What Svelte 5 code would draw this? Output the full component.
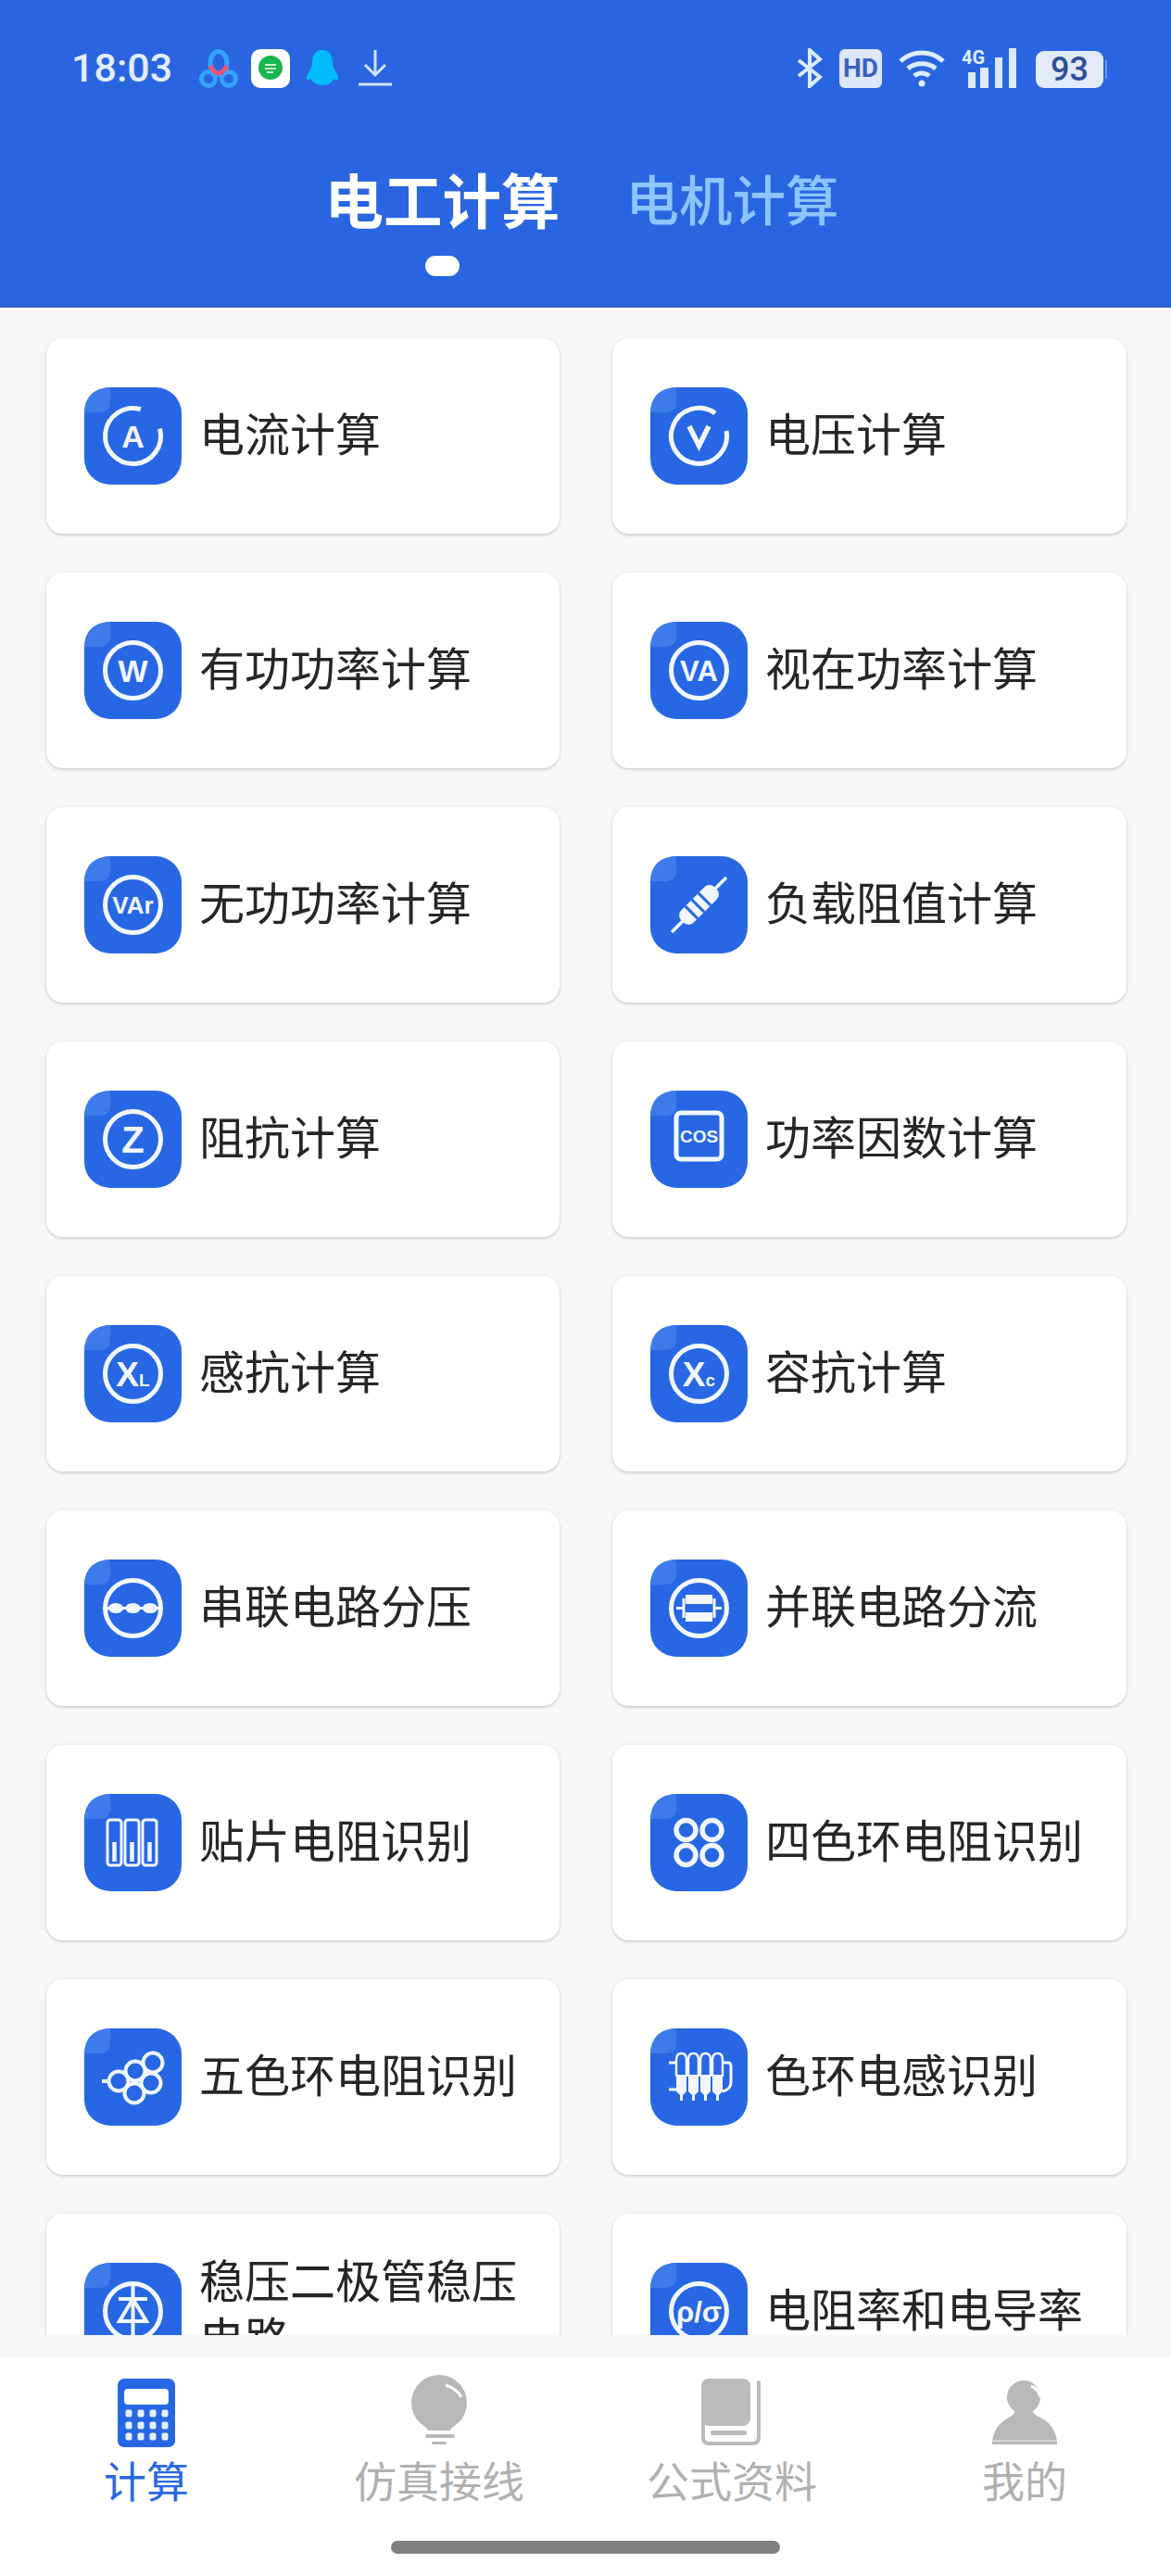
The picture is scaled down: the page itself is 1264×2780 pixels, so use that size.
<script>
  const items = [
    { label: '电流计算', icon: 'amp' },
    { label: '电压计算', icon: 'volt' },
    { label: '有功功率计算', icon: 'text', text: 'W', size: 34 },
    { label: '视在功率计算', icon: 'text', text: 'VA', size: 31 },
    { label: '无功功率计算', icon: 'text', text: 'VAr', size: 26 },
    { label: '负载阻值计算', icon: 'resistor' },
    { label: '阻抗计算', icon: 'text', text: 'Z', size: 40 },
    { label: '功率因数计算', icon: 'cos' },
    { label: '感抗计算', icon: 'text', text: 'X', sub: 'L', size: 37 },
    { label: '容抗计算', icon: 'text', text: 'X', sub: 'c', size: 37 },
    { label: '串联电路分压', icon: 'series' },
    { label: '并联电路分流', icon: 'parallel' },
    { label: '贴片电阻识别', icon: 'chip' },
    { label: '四色环电阻识别', icon: 'four' },
    { label: '五色环电阻识别', icon: 'five' },
    { label: '色环电感识别', icon: 'coil' },
    { label: '稳压二极管稳压电路', icon: 'zener' },
    { label: '电阻率和电导率', icon: 'text', text: 'ρ/σ', size: 31 }
  ];

  const dotRows = [37, 50, 62];
  const dotCols = [12, 25, 38, 51];
  const tabs = ['计算', '仿真接线', '公式资料', '我的'];
</script>

<div class="phone">
  <header class="header">
    <div class="status">
      <span class="time">18:03</span>
      <svg class="s-rings" width="42" height="42" viewBox="0 0 42 42" fill="none">
        <circle cx="10" cy="32" r="7.5" stroke="#37a3ff" stroke-width="5" />
        <circle cx="32" cy="32" r="7.5" stroke="#37a3ff" stroke-width="5" />
        <ellipse cx="21" cy="15" rx="9" ry="12.5" stroke="#37a3ff" stroke-width="5" />
        <path d="M12 18 Q21 34 30 18" stroke="#ef5474" stroke-width="5" />
      </svg>
      <svg class="s-app" width="42" height="42" viewBox="0 0 42 42">
        <rect width="42" height="42" rx="10" fill="#fff" />
        <circle cx="21" cy="20" r="13" fill="#16b84e" />
        <path d="M13 30 l6 -3 l-3 -3z" fill="#16b84e" />
        <path d="M15 17h12M15 21h12M17 25h7" stroke="#c9f2d6" stroke-width="2" />
      </svg>
      <svg class="s-qq" width="36" height="39" viewBox="0 0 36 39">
        <path d="M18 0C9 0 7 8 7 14C7 18 3 24 1 29C0 33 3 33 6 31C7 34 9 36 12 37C15 38 21 38 24 37C27 36 29 34 30 31C33 33 36 33 35 29C33 24 29 18 29 14C29 8 27 0 18 0Z" fill="#00bcff" />
      </svg>
      <svg class="s-down" width="36" height="40" viewBox="0 0 36 40" fill="none" stroke="#d3e4ff" stroke-width="3">
        <path d="M18 0V26M7 16L18 27L29 16M0 37H36" />
      </svg>
      <span class="status-gap"></span>
      <svg width="30" height="43" viewBox="0 0 30 43" fill="none" stroke="#dcebff" stroke-width="4">
        <path d="M3 13L26 31L15 41V2L26 12L3 30" />
      </svg>
      <span class="hd">HD</span>
      <svg class="s-wifi" width="50" height="41" viewBox="0 0 50 41" fill="none" stroke="#dcebff" stroke-width="5">
        <path d="M2 13C15 1 35 1 48 13M10 21C18 14 32 14 40 21M17 29C21 25 29 25 33 29" />
        <circle cx="25" cy="37" r="3.5" fill="#dcebff" stroke="none" />
      </svg>
      <div class="signal">
        <span class="net">4G</span>
        <span class="bar b1"></span>
        <span class="bar b2"></span>
        <span class="bar b3"></span>
        <span class="bar b4"></span>
      </div>
      <div class="battery">93</div>
      <span class="nub"></span>
    </div>

    <div class="tabs">
      <div class="tab active">
        <span>电工计算</span>
        <i></i>
      </div>
      <div class="tab">
        <span>电机计算</span>
      </div>
    </div>
  </header>

  <main class="list">
    <div class="grid">
      {#each items as item}
        <div class="card">
          <svg class="icon" width="105" height="105" viewBox="0 0 105 105" fill="none">
            <rect width="105" height="105" rx="28" fill="#2767e3" />
            <path d="M28 0V16Q28 27 16 27H0Q1 1 28 0Z" fill="#3d7bea" />
            <g stroke="#f2f7ff" stroke-width="5">
              {#if item.icon === 'amp'}
                <path d="M81.5 44.7A30 30 0 1 1 60.8 23.7" />
                <text class="gl" x="52.5" y="65" font-size="34" text-anchor="middle" fill="#f2f7ff" stroke="none">A</text>
              {:else if item.icon === 'volt'}
                <path d="M82 47A30 30 0 1 1 70 28" />
                <path d="M42 42L52.5 63L63 42" stroke-width="5.5" />
              {:else if item.icon === 'text'}
                <circle cx="52.5" cy="52.5" r="30" />
                <text class="gl" x="52.5" y={52.5 + item.size * 0.36} font-size={item.size} text-anchor="middle" fill="#f2f7ff" stroke="none">{item.text}{#if item.sub}<tspan font-size="19">{item.sub}</tspan>{/if}</text>
              {:else if item.icon === 'resistor'}
                <path d="M23 82L82 23" stroke-width="3.5" />
                <g transform="rotate(-45 52.5 52.5)">
                  <rect x="27" y="43" width="51" height="19" rx="8" fill="#eef5ff" stroke="none" />
                  <path d="M41 43V62M51 43V62M61 43V62" stroke="#2767e3" stroke-width="3" />
                </g>
              {:else if item.icon === 'cos'}
                <rect x="28" y="24" width="49" height="50" rx="5" />
                <text class="gl" x="52.5" y="56" font-size="19" text-anchor="middle" fill="#f2f7ff" stroke="none">COS</text>
              {:else if item.icon === 'series'}
                <circle cx="52.5" cy="52.5" r="30" />
                <path d="M23 52.5H82" stroke-width="3" />
                <ellipse cx="34" cy="52.5" rx="8" ry="5.5" fill="#f2f7ff" stroke="none" />
                <ellipse cx="52.5" cy="52.5" rx="8" ry="5.5" fill="#f2f7ff" stroke="none" />
                <ellipse cx="71" cy="52.5" rx="8" ry="5.5" fill="#f2f7ff" stroke="none" />
              {:else if item.icon === 'parallel'}
                <circle cx="52.5" cy="52.5" r="30" />
                <path d="M28 52.5H36M69 52.5H77M36 42V63M69 42V63" stroke-width="3" />
                <rect x="38" y="38" width="29" height="10" fill="#f2f7ff" stroke="none" />
                <rect x="38" y="57" width="29" height="10" fill="#f2f7ff" stroke="none" />
              {:else if item.icon === 'chip'}
                {#each [25, 44, 63] as x}
                  <rect x={x} y="28" width="15" height="49" rx="3" stroke-width="3" />
                  <path d="M{x + 7.5} 52V73" stroke-width="4.5" />
                {/each}
              {:else if item.icon === 'four'}
                <circle cx="38.5" cy="39" r="10.5" stroke-width="5.5" />
                <circle cx="66.5" cy="39" r="10.5" stroke-width="5.5" />
                <circle cx="38.5" cy="66" r="10.5" stroke-width="5.5" />
                <circle cx="66.5" cy="66" r="10.5" stroke-width="5.5" />
              {:else if item.icon === 'five'}
                <path d="M19 57H27" stroke-width="4" />
                <g stroke-width="4">
                  <circle cx="37" cy="57" r="10.5" />
                  <circle cx="55" cy="46" r="10.5" />
                  <circle cx="54" cy="70" r="10.5" />
                  <circle cx="74" cy="37" r="10.5" />
                  <circle cx="72" cy="59" r="10.5" />
                </g>
              {:else if item.icon === 'coil'}
                <path d="M20 37H28M20 66H28M78 37H84Q87 37 87 41V58Q87 66 78 68" stroke-width="3" />
                {#each [28, 41, 54, 67] as x}
                  <path d="M{x} 52V34Q{x} 27 {x + 5.5} 27Q{x + 11} 27 {x + 11} 34V52" stroke-width="2.5" />
                  <path d="M{x} 50H{x + 11}V68L{x + 7} 72V78H{x + 4}V72L{x} 68Z" fill="#f2f7ff" stroke="none" />
                {/each}
              {:else if item.icon === 'zener'}
                <circle cx="52.5" cy="52.5" r="30" />
                <path d="M52.5 22V83M37 39H68" stroke-width="4" />
                <path d="M52.5 39L38 63H67Z" stroke-width="4" />
              {/if}
            </g>
          </svg>
          <span class="label">{item.label}</span>
        </div>
      {/each}
    </div>
  </main>
  <div class="strip"></div>

  <footer class="footer">
    <nav class="nav">
      {#each tabs as tab, i}
        <div class="nav-item" class:on={i === 0}>
          <div class="nav-icon">
            {#if i === 0}
              <svg width="62" height="80" viewBox="0 -4 62 80">
                <rect width="62" height="74" rx="7" fill="#2767e3" />
                <rect x="7" y="11" width="48" height="17" rx="4" fill="#fff" />
                {#each dotRows as y}
                  {#each dotCols as x}
                    <rect x={x - 3.5} y={y - 3.5} width="7" height="8" rx="2" fill="#e4f0ff" />
                  {/each}
                {/each}
              </svg>
            {:else if i === 1}
              <svg width="62" height="80" viewBox="0 0 62 80">
                <circle cx="31" cy="30" r="30" fill="#b8b8b8" />
                <path d="M13 50H49L43 60H19Z" fill="#b8b8b8" />
                <path d="M38 11Q50 15 55 24" fill="none" stroke="#fff" stroke-width="3" />
                <rect x="16" y="64" width="32" height="4" rx="2" fill="#b8b8b8" />
                <rect x="23" y="72" width="16" height="3" rx="1.5" fill="#b8b8b8" />
              </svg>
            {:else if i === 2}
              <svg width="66" height="80" viewBox="0 0 66 80">
                <rect x="0" y="4" width="53" height="51" rx="8" fill="#bbb" />
                <path d="M2 48V68Q2 74 8 74H55Q62 74 62 67V8" fill="none" stroke="#bbb" stroke-width="4" stroke-linecap="round" />
                <rect x="10" y="60" width="39" height="5" rx="2" fill="#bbb" />
              </svg>
            {:else}
              <svg width="70" height="80" viewBox="0 0 70 80">
                <circle cx="34" cy="24" r="18" fill="#b8b8b8" />
                <path d="M42 12Q50 15 52 24" fill="none" stroke="#fff" stroke-width="3" />
                <path d="M25 38H43Q46 44 52 46Q68 54 70 72V75H0V72Q2 54 18 46Q24 43 25 38Z" fill="#b8b8b8" />
                <rect x="0" y="70" width="70" height="2" fill="#d6d6d6" />
              </svg>
            {/if}
          </div>
          <span>{tab}</span>
        </div>
      {/each}
    </nav>
    <div class="home"></div>
  </footer>
</div>

<style>
  :global(body) {
    margin: 0;
    background: #f7f7f7;
  }

  .phone {
    width: 1264px;
    height: 2780px;
    display: flex;
    flex-direction: column;
    overflow: hidden;
    font-family: 'Noto Sans CJK SC', 'Noto Sans', sans-serif;
    background: #f7f7f7;
  }

  .header {
    height: 332px;
    flex: none;
    box-sizing: border-box;
    padding-top: 52px;
    background: #2965e0;
    border-bottom: 2px solid #3559c4;
  }

  .status {
    height: 43px;
    display: flex;
    align-items: center;
    padding-left: 77px;
    color: #e3edff;
  }

  .time {
    width: 138px;
    font: 500 43px/43px Roboto, sans-serif;
    flex: none;
  }

  .s-app {
    margin-left: 14px;
  }

  .s-qq {
    margin-left: 17px;
  }

  .s-down {
    margin-left: 21px;
  }

  .status-gap {
    width: 436px;
    flex: none;
  }

  .hd {
    width: 46px;
    height: 42px;
    margin-left: 17px;
    border-radius: 6px;
    background: #dde7f9;
    color: #3a62bb;
    font: 700 28px/42px Roboto, sans-serif;
    text-align: center;
  }

  .s-wifi {
    margin-left: 18px;
  }

  .signal {
    position: relative;
    width: 60px;
    height: 43px;
    margin-left: 18px;
  }

  .net {
    position: absolute;
    left: 0;
    top: 0;
    font: 700 20px/20px Roboto, sans-serif;
  }

  .bar {
    position: absolute;
    bottom: 0;
    background: #dce8fb;
  }

  .b1 {
    left: 7px;
    width: 8px;
    height: 17px;
  }

  .b2 {
    left: 20px;
    width: 9px;
    height: 22px;
  }

  .b3 {
    left: 36px;
    width: 8px;
    height: 33px;
  }

  .b4 {
    left: 51px;
    width: 8px;
    height: 43px;
  }

  .battery {
    width: 73px;
    height: 40px;
    margin-left: 20px;
    margin-top: 3px;
    border-radius: 9px;
    background: #e3ebfb;
    color: #2f4f96;
    font: 500 36px/40px Roboto, sans-serif;
    text-align: center;
  }

  .nub {
    width: 2px;
    height: 20px;
    margin-left: 2px;
    margin-top: 3px;
    background: #6f97ec;
  }

  .tabs {
    display: flex;
    justify-content: center;
    gap: 71px;
    margin-top: 73px;
    padding-right: 8px;
    align-items: flex-start;
  }

  .tab {
    display: flex;
    flex-direction: column;
    align-items: center;
    color: #8cc5ff;
    font-size: 57.5px;
    font-weight: 500;
    line-height: 90px;
  }

  .tab.active {
    color: #fff;
    font-size: 63.5px;
    font-weight: 700;
  }

  .tab i {
    display: block;
    width: 37px;
    height: 22px;
    margin-top: 18px;
    border-radius: 11px;
    background: #fff;
  }

  .list {
    height: 2188px;
    flex: none;
    overflow: hidden;
    box-sizing: border-box;
    padding: 33px 48px 0 50px;
  }

  .grid {
    display: grid;
    grid-template-columns: 554px 555px;
    column-gap: 57px;
    row-gap: 42px;
  }

  .card {
    height: 211px;
    box-sizing: border-box;
    padding: 0 16px 0 41px;
    display: flex;
    align-items: center;
    gap: 19px;
    border-radius: 18px;
    background: #fff;
    box-shadow: 0 2px 3px rgba(0, 0, 0, 0.13), 0 0 4px rgba(0, 0, 0, 0.07);
  }

  .icon {
    flex: none;
  }

  .gl {
    font-family: 'Liberation Sans', Arial, sans-serif;
    font-weight: 700;
  }

  .label {
    padding-bottom: 10px;
    font-size: 49px;
    line-height: 62px;
    color: #262626;
  }

  .strip {
    height: 24px;
    flex: none;
    background: #f7f7f7;
  }

  .footer {
    flex: 1;
    background: #fff;
    display: flex;
    flex-direction: column;
    align-items: center;
  }

  .nav {
    width: 100%;
    display: grid;
    grid-template-columns: repeat(4, 316px);
    padding-top: 19px;
  }

  .nav-item {
    display: flex;
    flex-direction: column;
    align-items: center;
    color: #b0b0b0;
    font-size: 46px;
    line-height: 56px;
  }

  .nav-item.on {
    color: #2767e3;
  }

  .nav-icon {
    height: 80px;
    margin-bottom: 4px;
  }

  .nav-icon svg {
    display: block;
  }

  .home {
    width: 420px;
    height: 14px;
    margin-top: 39px;
    border-radius: 7px;
    background: #808080;
  }
</style>
